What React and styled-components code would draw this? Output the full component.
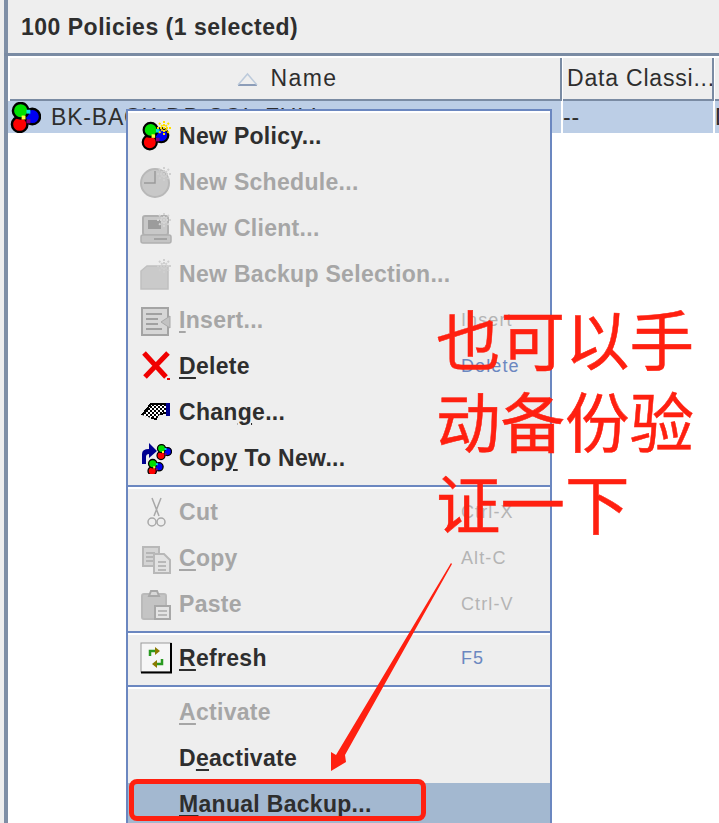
import styled, { createGlobalStyle } from 'styled-components';

const GlobalStyle = createGlobalStyle`
  html, body { margin: 0; padding: 0; background: #fff; }
  #root { width: 719px; height: 823px; overflow: hidden; }
`;

const Page = styled.div`
  position: relative;
  width: 719px;
  height: 823px;
  overflow: hidden;
  box-sizing: border-box;
  padding-left: 4px;
  background: #eee;
  font-family: "Liberation Sans", Arial, sans-serif;
  color: #2e2e2e;
`;

const Frame = styled.div`
  height: 100%;
  box-sizing: border-box;
  background: #fff;
  border-left: 4px solid #7f8fa6;
`;

const TitleBar = styled.div`
  height: 53px;
  box-sizing: border-box;
  background: #eee;
  display: flex;
  align-items: center;
  padding: 2px 0 0 13px;
  font-size: 23px;
  font-weight: bold;
  letter-spacing: 0.5px;
`;

const TitleRule = styled.div`
  height: 3px;
  margin-left: -4px;
  background: #7a8ba3;
`;

const HeaderRow = styled.div`
  display: flex;
  margin-top: 2px;
  padding-left: 2px;
  height: 43px;
`;

const HeaderCell = styled.div`
  box-sizing: border-box;
  width: ${(p) => p.$w}px;
  flex: none;
  background: #eee;
  border-bottom: 2px solid #7a8ba3;
  border-right: 2px solid #7a8ba3;
  margin-right: 1px;
  display: flex;
  align-items: center;
  justify-content: ${(p) => (p.$center ? 'center' : 'flex-start')};
  gap: 13px;
  padding-left: 4px;
  font-size: 23px;
  letter-spacing: ${(p) => (p.$center ? 1.4 : 0.8)}px;
  white-space: nowrap;
  overflow: hidden;
`;

const DataRow = styled.div`
  display: flex;
  height: 32px;
`;

const DataCell = styled.div`
  box-sizing: border-box;
  width: ${(p) => p.$w}px;
  flex: none;
  background: #bcceE6;
  margin-right: 2px;
  display: flex;
  align-items: center;
  gap: 10px;
  padding-left: ${(p) => p.$pad}px;
  font-size: 23px;
  letter-spacing: 0.8px;
  white-space: nowrap;
  overflow: hidden;
`;

const Menu = styled.div`
  position: absolute;
  left: 126px;
  top: 109px;
  width: 426px;
  box-sizing: border-box;
  background: #eee;
  border: 2px solid #6b87c0;
  border-bottom: none;
  box-shadow: inset 0 2px 0 #fff;
`;

const Section = styled.div`
  padding-top: ${(p) => p.$top || 0}px;
  padding-bottom: 4px;
`;

const Divider = styled.div`
  height: 2px;
  background: #6b87c0;
  border-bottom: 2px solid #fff;
`;

const Item = styled.div`
  display: flex;
  align-items: center;
  height: ${(p) => (p.$active ? 42 : 46)}px;
  margin-top: ${(p) => (p.$active ? 2 : 0)}px;
  padding-bottom: ${(p) => (p.$active ? 4 : 0)}px;
  background: ${(p) => (p.$active ? '#a3b8d0' : 'transparent')};
  font-size: 23px;
  font-weight: bold;
  letter-spacing: 0.3px;
  color: ${(p) => (p.$off ? '#a6a6a6' : '#2e2e2e')};
`;

const IconSlot = styled.span`
  width: 51px;
  flex: none;
  display: flex;
  justify-content: flex-end;
  padding-right: 7px;
  box-sizing: border-box;
`;

const Label = styled.span`
  width: 282px;
  flex: none;
  padding-top: 1px;
  white-space: nowrap;
`;

const Shortcut = styled.span`
  font-size: 18px;
  font-weight: normal;
  letter-spacing: 1.1px;
  color: ${(p) => (p.$off ? '#b4b4b4' : '#6b87c0')};
`;

const Mn = styled.span`
  text-decoration: underline;
  text-underline-offset: 3px;
  text-decoration-thickness: 2px;
`;

const Note = styled.div`
  position: absolute;
  left: 436px;
  top: 296px;
  width: 270px;
  font-family: "Noto Sans CJK SC", sans-serif;
  font-size: 64.500px;
  line-height: 82px;
  color: #ff2010;
  -webkit-text-stroke: 0.5px #ff2010;
`;

const Highlight = styled.div`
  position: absolute;
  left: 129px;
  top: 779px;
  width: 297px;
  height: 42px;
  box-sizing: border-box;
  border: 5px solid #ff2010;
  border-radius: 8px;
`;

const ArrowSvg = styled.svg`
  position: absolute;
  left: 320px;
  top: 555px;
`;

const Icon = ({ children, size = 32 }) => (
  <svg width={size} height={size} viewBox="0 0 32 32">{children}</svg>
);

const Blobs = ({ x = 0, y = 0, s = 1 }) => (
  <g transform={`translate(${x} ${y}) scale(${s})`} stroke="#000" strokeWidth="2.5">
    <circle cx="23" cy="15" r="8" fill="#0000f0" />
    <circle cx="10" cy="23" r="8" fill="#f00" />
    <circle cx="11" cy="9" r="8" fill="#00e000" />
    <rect x="12" y="14" width="4" height="4" fill="#ffff40" stroke="none" />
    <rect x="17" y="8" width="4" height="4" fill="#00e0e0" stroke="none" />
    <rect x="17" y="18" width="4" height="4" fill="#800080" stroke="none" />
  </g>
);

const Sparkle = ({ color = '#ffe000' }) => (
  <path d="M24 1v14M17 8h14M19 3l10 10M29 3L19 13" stroke={color} strokeWidth="2" strokeDasharray="2 1" fill="none" />
);

const NewPolicyIcon = () => (
  <Icon><Blobs x={1} y={2} s={0.88} /><Sparkle /></Icon>
);

const ScheduleIcon = () => (
  <Icon>
    <circle cx="15" cy="17" r="14" fill="#c8c8c8" stroke="#b8b8b8" strokeWidth="2" />
    <path d="M15 5v12H4" stroke="#9a9a9a" strokeWidth="1.5" fill="none" />
    <Sparkle color="#cfcfcf" />
  </Icon>
);

const ClientIcon = () => (
  <Icon>
    <rect x="3" y="4" width="25" height="19" rx="2" fill="#c8c8c8" stroke="#b0b0b0" strokeWidth="2" />
    <rect x="8" y="8" width="13" height="9" fill="#9c9c9c" />
    <rect x="1" y="23" width="30" height="8" rx="2" fill="#c4c4c4" stroke="#b0b0b0" strokeWidth="1.5" />
    <path d="M14 27h13" stroke="#999" strokeWidth="1.5" />
    <Sparkle color="#d4d4d4" />
  </Icon>
);

const SelectionIcon = () => (
  <Icon>
    <path d="M1 13l6-5h21v23H1z" fill="#cacaca" stroke="#c0c0c0" strokeWidth="1.5" />
    <Sparkle color="#cfcfcf" />
  </Icon>
);

const InsertIcon = () => (
  <Icon>
    <rect x="2" y="4" width="26" height="27" fill="#d6d6d6" stroke="#a4a4a4" strokeWidth="2" />
    <path d="M6 10h16M6 15h12M6 20h12M6 25h16" stroke="#a0a0a0" strokeWidth="2" />
    <path d="M30 12v12l-9-6z" fill="#c2c2c2" stroke="#a8a8a8" />
  </Icon>
);

const DeleteIcon = () => (
  <Icon>
    <path d="M4 3l22 24M28 3L5 27" stroke="#f00000" strokeWidth="5" fill="none" />
    <rect x="27" y="28" width="3" height="2" fill="#f00000" />
  </Icon>
);

const ChangeIcon = () => (
  <Icon>
    <defs>
      <pattern id="handCheck" width="4" height="4" patternUnits="userSpaceOnUse">
        <rect width="4" height="4" fill="#fff" />
        <rect width="2" height="2" fill="#000" />
        <rect x="2" y="2" width="2" height="2" fill="#000" />
      </pattern>
    </defs>
    <path d="M2 19L11 8h15v9l-6 1-3 5-6-1z" fill="url(#handCheck)" />
    <path d="M2 19L11 8h15M26 17l-6 1M17 23l-6-1" stroke="#000" strokeWidth="2" fill="none" shapeRendering="crispEdges" />
    <rect x="26" y="7" width="4" height="13" fill="#000090" />
  </Icon>
);

const CopyNewIcon = () => (
  <Icon>
    <path d="M2 22V12q0-5 7-5V1l8 8-8 7v-4q-3 0-3 3v7z" fill="#000090" />
    <Blobs x={16} y={2} s={0.5} />
    <Blobs x={7} y={17} s={0.52} />
  </Icon>
);

const CutIcon = () => (
  <Icon>
    <path d="M12 2l7 18M21 2l-7 18" stroke="#a8a8a8" strokeWidth="1.5" fill="none" />
    <circle cx="12" cy="26" r="4" fill="none" stroke="#a8a8a8" strokeWidth="1.5" />
    <circle cx="21" cy="26" r="4" fill="none" stroke="#a8a8a8" strokeWidth="1.5" />
  </Icon>
);

const CopyIcon = () => (
  <Icon>
    <rect x="3" y="5" width="16" height="19" fill="#d4d4d4" stroke="#b8b8b8" strokeWidth="2" />
    <path d="M6 11h9M6 15h9M6 19h9" stroke="#aaa" strokeWidth="1.5" />
    <path d="M14 12h10l6 6v13H14z" fill="#e2e2e2" stroke="#b8b8b8" strokeWidth="2" />
    <path d="M18 20h8M18 24h8M18 28h8" stroke="#aaa" strokeWidth="1.5" />
  </Icon>
);

const PasteIcon = () => (
  <Icon>
    <rect x="2" y="6" width="24" height="25" rx="2" fill="#c4c4c4" stroke="#bababa" strokeWidth="2" />
    <path d="M9 8l2-5h6l2 5z" fill="#d8d8d8" stroke="#a8a8a8" strokeWidth="2" />
    <rect x="15" y="18" width="15" height="13" fill="#e4e4e4" stroke="#a8a8a8" strokeWidth="2" />
    <path d="M18 23h9M18 27h9" stroke="#aaa" strokeWidth="1.5" />
  </Icon>
);

const RefreshIcon = () => (
  <Icon>
    <rect x="1" y="1" width="30" height="29" fill="#f6f6f6" stroke="#999" strokeWidth="1" />
    <path d="M1 30.500h31M31 1v30" stroke="#000" strokeWidth="2" />
    <path d="M10 14V9h5" stroke="#2a9a20" strokeWidth="2.5" fill="none" />
    <path d="M15 5l5 4-5 4z" fill="#8a7a00" />
    <path d="M22 17v5h-5" stroke="#2a9a20" strokeWidth="2.5" fill="none" />
    <path d="M17 18l-5 4 5 4z" fill="#8a7a00" />
  </Icon>
);

const SortArrow = () => (
  <svg width="21" height="14" viewBox="0 0 21 14">
    <path d="M1 13h19" stroke="#8c9db8" strokeWidth="2" />
    <path d="M1 13L10.500 2l9.500 11" stroke="#bccadb" strokeWidth="1.500" fill="none" />
  </svg>
);

const Arrow = () => (
  <ArrowSvg width="140" height="225" viewBox="320 555 140 225">
    <path d="M451 563L452 564 345 755 346 762 331 771 331 752 336 755z" fill="#ff2010" />
  </ArrowSvg>
);

export default function App() {
  return (
    <Page>
      <GlobalStyle />
      <Frame>
        <TitleBar>100 Policies (1 selected)</TitleBar>
        <TitleRule />
        <HeaderRow>
          <HeaderCell $w={552} $center>
            <SortArrow />
            Name
          </HeaderCell>
          <HeaderCell $w={151}>Data Classi...</HeaderCell>
          <HeaderCell $w={20} />
        </HeaderRow>
        <DataRow>
          <DataCell $w={553} $pad={2}>
            <svg width="31" height="31" viewBox="0 0 32 32"><Blobs /></svg>
            BK-BACK-DB-SQL-FULL
          </DataCell>
          <DataCell $w={150} $pad={0}>--</DataCell>
          <DataCell $w={20} $pad={0}>D</DataCell>
        </DataRow>
      </Frame>

      <Menu>
        <Section $top={2}>
          <Item><IconSlot><NewPolicyIcon /></IconSlot><Label>New Policy...</Label></Item>
          <Item $off><IconSlot><ScheduleIcon /></IconSlot><Label>New Schedule...</Label></Item>
          <Item $off><IconSlot><ClientIcon /></IconSlot><Label>New Client...</Label></Item>
          <Item $off><IconSlot><SelectionIcon /></IconSlot><Label>New Backup Selection...</Label></Item>
          <Item $off><IconSlot><InsertIcon /></IconSlot><Label><Mn>I</Mn>nsert...</Label><Shortcut $off>Insert</Shortcut></Item>
          <Item><IconSlot><DeleteIcon /></IconSlot><Label><Mn>D</Mn>elete</Label><Shortcut>Delete</Shortcut></Item>
          <Item><IconSlot><ChangeIcon /></IconSlot><Label>Chan<Mn>g</Mn>e...</Label></Item>
          <Item><IconSlot><CopyNewIcon /></IconSlot><Label>Cop<Mn>y</Mn> To New...</Label></Item>
        </Section>
        <Divider />
        <Section>
          <Item $off><IconSlot><CutIcon /></IconSlot><Label>Cut</Label><Shortcut $off>Ctrl-X</Shortcut></Item>
          <Item $off><IconSlot><CopyIcon /></IconSlot><Label><Mn>C</Mn>opy</Label><Shortcut $off>Alt-C</Shortcut></Item>
          <Item $off><IconSlot><PasteIcon /></IconSlot><Label>Paste</Label><Shortcut $off>Ctrl-V</Shortcut></Item>
        </Section>
        <Divider />
        <Section>
          <Item><IconSlot><RefreshIcon /></IconSlot><Label><Mn>R</Mn>efresh</Label><Shortcut>F5</Shortcut></Item>
        </Section>
        <Divider />
        <Section>
          <Item $off><IconSlot /><Label><Mn>A</Mn>ctivate</Label></Item>
          <Item><IconSlot /><Label>D<Mn>e</Mn>activate</Label></Item>
          <Item $active><IconSlot /><Label><Mn>M</Mn>anual Backup...</Label></Item>
        </Section>
      </Menu>

      <Note>也可以手 动备份验 证一下</Note>
      <Arrow />
      <Highlight />
    </Page>
  );
}
